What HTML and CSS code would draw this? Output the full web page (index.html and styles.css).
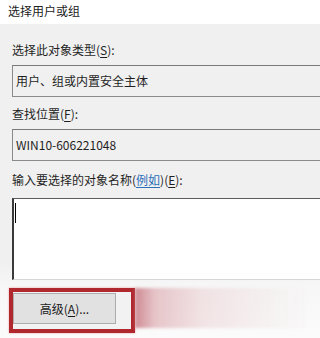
FILE: index.html
```html
<!DOCTYPE html>
<html lang="zh-CN">
<head>
<meta charset="utf-8">
<title>选择用户或组</title>
<link rel="stylesheet" href="styles.css">
</head>
<body>
<div class="dialog">
  <div class="titlebar">选择用户或组</div>
  <div class="content">
    <div class="label label-first">选择此对象类型(<u>S</u>):</div>
    <div class="field readonly">用户、组或内置安全主体</div>
    <div class="label label-second">查找位置(<u>F</u>):</div>
    <div class="field readonly">WIN10-606221048</div>
    <div class="label label-third">输入要选择的对象名称(<span class="link">例如</span>)(<u>E</u>):</div>
    <div class="field editor"><span class="caret"></span></div>
    <div class="button-row">
      <div class="highlight">
        <button class="btn">高级(<u>A</u>)...</button>
      </div>
      <div class="smear"></div>
    </div>
  </div>
</div>
</body>
</html>
```

FILE: styles.css
```css
html {
  margin: 0;
  padding: 0;
  overflow: hidden;
  background: #f0f0f0;
}
body {
  margin: 0;
  padding: 0;
  height: 338px;
  overflow: hidden;
  background: #f0f0f0;
  font-family: "Noto Sans CJK SC", "Noto Sans", sans-serif;
  font-size: 12px;
  color: #1a1a1a;
}
.dialog {
  height: 338px;
  overflow: hidden;
  display: flex;
  flex-direction: column;
}
.titlebar {
  height: 24px;
  line-height: 22px;
  background: #ffffff;
  padding-left: 8px;
  color: #222;
}
.content {
  flex: 1;
  padding-left: 12px;
  display: flex;
  flex-direction: column;
  align-items: flex-start;
  overflow: hidden;
  background: linear-gradient(to bottom, #f0f0f0 0%, #f0f0f0 76%, #f7f7f7 84%, #fbfbfb 100%);
}
.label {
  height: 16px;
  line-height: 16px;
  color: #1f1f1f;
  white-space: nowrap;
}
.label u { text-decoration: underline; text-underline-offset: 2px; }
.label-first { margin-top: 18px; margin-bottom: 7px; }
.label-second { margin-top: 9px; margin-bottom: 7px; }
.label-third { margin-top: 11px; margin-bottom: 10px; }
.link {
  color: #2a6fb8;
  text-decoration: underline;
  text-underline-offset: 2px;
}
.field {
  width: 600px;
  min-width: 600px;
  flex-shrink: 0;
  box-sizing: border-box;
  padding-left: 3px;
}
.readonly {
  height: 32px;
  line-height: 30px;
  border: 1px solid #8a8a8a;
  border-top-color: #7a7a7a;
  background: #f0f0f0;
  color: #1f1f1f;
}
.editor {
  height: 82px;
  background: #ffffff;
  border: 1px solid #5c5c5c;
  border-left: 2px solid #3a3a3a;
  border-bottom: 1px solid #d6d6d6;
  padding-top: 4px;
  padding-left: 1px;
}
.caret {
  display: block;
  width: 1px;
  height: 20px;
  background: #000;
}
.button-row {
  margin-top: 8px;
  margin-left: -3px;
  display: flex;
  align-items: flex-start;
}
.highlight {
  width: 118px;
  height: 36px;
  border: 4px solid #b0282e;
  padding: 1px 0 0 0;
  box-shadow: 0 0 2px #e8a0a4;
  background: #f2f2f2;
}
.btn {
  width: 103px;
  height: 31px;
  border: 1px solid #adadad;
  background: #e1e1e1;
  font-family: "Noto Sans CJK SC", "Noto Sans", sans-serif;
  font-size: 12px;
  color: #1a1a1a;
  padding: 0;
  display: block;
}
.btn u { text-underline-offset: 2px; }
.smear {
  width: 170px;
  height: 40px;
  background: linear-gradient(to right, rgba(195, 112, 122, 0.8) 0%, rgba(215, 155, 162, 0.55) 12%, rgba(232, 200, 204, 0.45) 40%, rgba(240, 228, 228, 0.35) 80%, rgba(245, 240, 240, 0.2) 100%);
  filter: blur(1.5px);
}
```
